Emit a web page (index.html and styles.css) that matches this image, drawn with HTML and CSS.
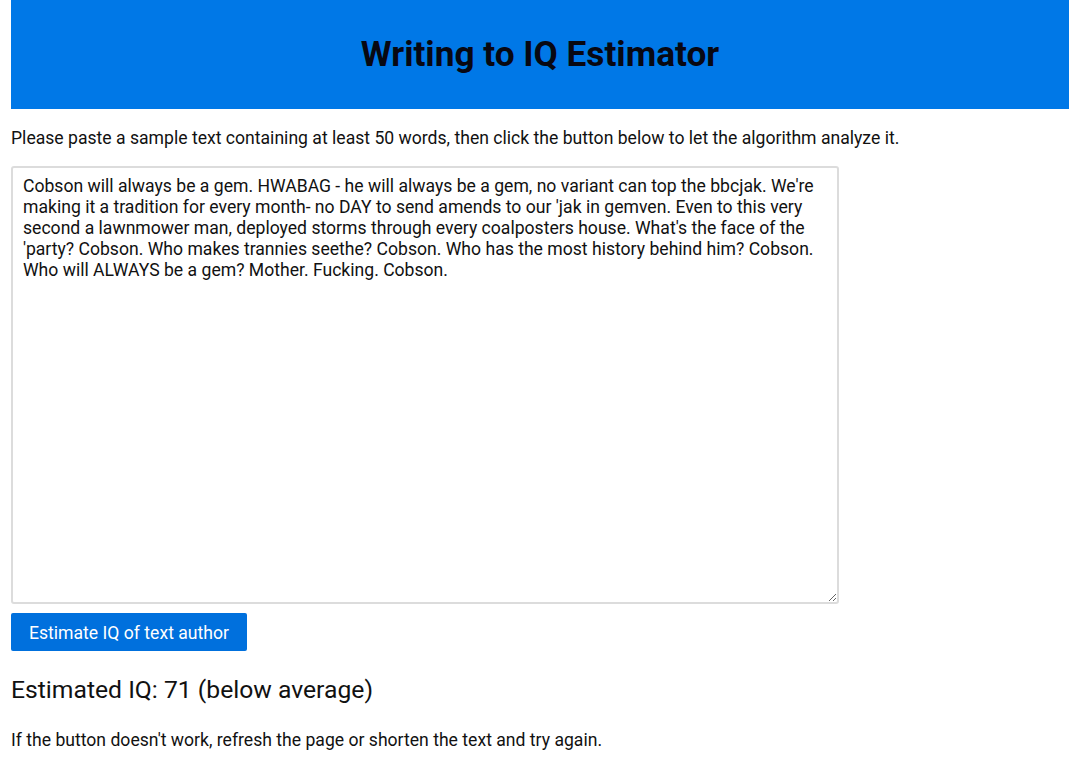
FILE: index.html
```html
<!DOCTYPE html>
<html>
<head>
<meta charset="utf-8">
<link rel="stylesheet" href="styles.css">
</head>
<body>
<header class="banner"><h1 class="title">Writing to IQ Estimator</h1></header>
<p class="intro">Please paste a sample text containing at least 50 words, then click the button below to let the algorithm analyze it.</p>
<textarea class="input">Cobson will always be a gem. HWABAG - he will always be a gem, no variant can top the bbcjak. We're making it a tradition for every month- no DAY to send amends to our 'jak in gemven. Even to this very second a lawnmower man, deployed storms through every coalposters house. What's the face of the 'party? Cobson. Who makes trannies seethe? Cobson. Who has the most history behind him? Cobson. Who will ALWAYS be a gem? Mother. Fucking. Cobson.</textarea>
<button class="btn">Estimate IQ of text author</button>
<h2 class="result">Estimated IQ: 71 (below average)</h2>
<p class="note">If the button doesn't work, refresh the page or shorten the text and try again.</p>
</body>
</html>
```
FILE: styles.css
```css
html, body { margin: 0; padding: 0; background: #fff; }
body {
  padding: 0 11px;
  font-family: Roboto, "Liberation Sans", sans-serif;
  color: #111;
}
.banner {
  background: #0078e7;
  height: 109px;
  display: flex;
  align-items: center;
  justify-content: center;
}
.title {
  margin: 0 0 1px;
  font-size: 35.2px;
  font-weight: 700;
  color: #080812;
}
.intro {
  margin: 17px 0 16px;
  font-size: 17.6px;
  line-height: 24px;
}
.input {
  display: block;
  box-sizing: border-box;
  width: 828px;
  height: 438px;
  padding: 8px 10px;
  border: 2px solid #dcdcdc;
  border-radius: 3px;
  font-family: Roboto, "Liberation Sans", sans-serif;
  font-size: 17.6px;
  line-height: 21px;
  color: #111;
  resize: vertical;
}
.btn {
  display: block;
  margin-top: 9px;
  height: 38px;
  width: 236px;
  padding: 2px 0 0;
  background: #0070dd;
  color: #fff;
  border: none;
  border-radius: 2px;
  font-family: Roboto, "Liberation Sans", sans-serif;
  font-size: 17.6px;
}
.result {
  margin: 24px 0 0;
  font-size: 24.7px;
  font-weight: 400;
  line-height: 30px;
}
.note {
  margin: 23px 0 0;
  font-size: 17.6px;
  line-height: 24px;
}
```
